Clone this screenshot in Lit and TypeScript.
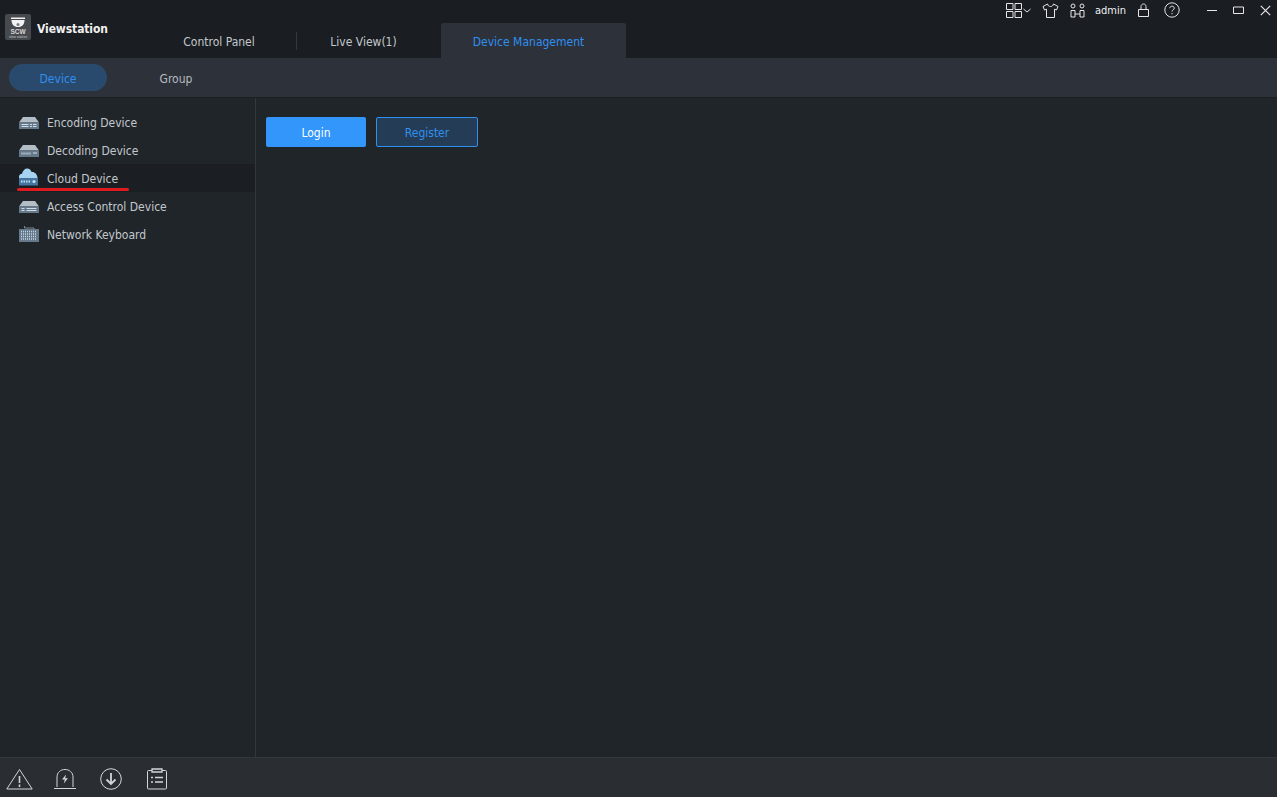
import { LitElement, html, css, svg } from "lit";
import { customElement } from "lit/decorators.js";

// device glyph shared by the sidebar rows, only the front panel differs
const deviceBody = svg`
  <path d="M4 2h12l4 5.500H0z" fill="#b3bdc5"/>
  <rect x="0" y="7.500" width="20" height="6.500" fill="#66798a"/>`;

const icons = {
  encoding: html`<svg width="20" height="14" viewBox="0 0 20 14">${deviceBody}
    <path d="M2.500 9.500h7M2.500 11.500h7M11 9.500h2M14 9.500h3.500M11 11.500h2M14 11.500h3.500" stroke="#cfdde8" stroke-width="1"/></svg>`,
  decoding: html`<svg width="20" height="14" viewBox="0 0 20 14">${deviceBody}
    <path d="M2.500 10.500h10" stroke="#cfdde8" stroke-width="2" stroke-dasharray="1 1"/>
    <path d="M14 10h4" stroke="#cfdde8" stroke-width="1"/></svg>`,
  cloud: html`<svg class="cloud" width="21" height="18" viewBox="0 0 21 18">
    <path d="M1 10C.6 7 2.300 5.800 4 5.800 4.800 2.500 7 .5 9 .5c2.500 0 4 1.700 4.600 3.600 3-.4 5.400 1.900 6 5.900z" fill="#a6d3f2"/>
    <rect x="1" y="10" width="19" height="7.500" fill="#46759f"/>
    <path d="M3 13.500h9" stroke="#bfe0f7" stroke-width="2" stroke-dasharray="1.500 1"/>
    <circle cx="16" cy="13.500" r="1.600" fill="#bfe0f7"/></svg>`,
  access: html`<svg width="20" height="14" viewBox="0 0 20 14">${deviceBody}
    <path d="M2.500 9.500h3M2.500 11.500h3M7.500 9.500h10M7.500 11.500h10" stroke="#cfdde8" stroke-width="1"/></svg>`,
  keyboard: html`<svg width="20" height="18" viewBox="0 0 20 18">
    <path d="M5.500 1v2h9.500v1" fill="none" stroke="#7d8a95" stroke-width="1"/>
    <rect x="0" y="4" width="20" height="13" fill="#66798a"/>
    <path d="M2 6.500h16M2 9h16M2 11.500h16M2 14h16" stroke="#c3d6e6" stroke-width="1.500" stroke-dasharray="1 1"/></svg>`,
};

const menu = [
  { label: "Encoding Device", icon: icons.encoding },
  { label: "Decoding Device", icon: icons.decoding },
  { label: "Cloud Device", icon: icons.cloud, selected: true },
  { label: "Access Control Device", icon: icons.access },
  { label: "Network Keyboard", icon: icons.keyboard },
];

@customElement("app-root")
export class AppRoot extends LitElement {
  static styles = css`
    :host {
      display: flex;
      flex-direction: column;
      width: 1277px;
      height: 797px;
      overflow: hidden;
      background: #20252a;
      color: #c3c8cc;
      font-family: "DejaVu Sans Condensed", "DejaVu Sans", sans-serif;
      font-stretch: condensed;
      font-size: 12px;
    }
    .titlebar {
      height: 58px;
      flex: none;
      display: flex;
      background: #1a1d21;
    }
    .brand {
      width: 157px;
      flex: none;
      display: flex;
      align-items: flex-start;
      gap: 6px;
      padding: 14px 0 0 5px;
      box-sizing: border-box;
      color: #f0f0f0;
      font-weight: 700;
    }
    .brand span {
      margin-top: 8px;
      letter-spacing: -0.1px;
    }
    .logo {
      width: 26px;
      height: 26px;
      display: block;
    }
    .logo .mark-name {
      font-family: "Liberation Sans", sans-serif;
      font-weight: 700;
      font-size: 6.500px;
      fill: #d8d8d8;
    }
    .logo .mark-sub {
      font-family: "Liberation Sans", sans-serif;
      font-size: 3.200px;
      fill: #a8a9ab;
    }
    .tabs {
      display: flex;
      align-items: flex-end;
      height: 58px;
    }
    .tab {
      height: 35px;
      display: flex;
      align-items: center;
      justify-content: center;
      box-sizing: border-box;
      padding-top: 2px;
    }
    .tab.control {
      width: 139px;
      padding-right: 15px;
    }
    .tab.live {
      width: 144px;
      padding-right: 11px;
    }
    .tab.active {
      width: 185px;
      padding-right: 10px;
      background: #2d323a;
      color: #2f8fef;
      border-radius: 2px 2px 0 0;
    }
    .sep {
      width: 1px;
      height: 18px;
      background: #33383e;
      align-self: center;
      margin-top: 24px;
    }
    .tools {
      margin-left: auto;
      display: flex;
      align-items: center;
      height: 20px;
      color: #e4e6e8;
      padding-right: 6px;
    }
    .tools svg {
      display: block;
      flex: none;
    }
    .admin {
      color: #eef1f4;
      font-size: 11px;
      padding-top: 1px;
    }
    .subbar {
      height: 40px;
      flex: none;
      display: flex;
      align-items: center;
      box-sizing: border-box;
      padding-left: 9px;
      background: #2d323a;
      border-bottom: 1px solid #1c2024;
    }
    .pill {
      width: 98px;
      height: 27px;
      border-radius: 14px;
      display: flex;
      align-items: center;
      justify-content: center;
      box-sizing: border-box;
      padding-top: 2px;
    }
    .pill.on {
      background: #2a4a6d;
      color: #2f8fef;
    }
    .pill.group {
      margin-left: 20px;
      color: #b5bac0;
    }
    .body {
      flex: 1;
      display: flex;
      min-height: 0;
    }
    .side {
      width: 256px;
      flex: none;
      box-sizing: border-box;
      padding-top: 10px;
      border-right: 1px solid #32373d;
    }
    .row {
      position: relative;
      height: 28px;
      display: flex;
      align-items: center;
      padding-left: 19px;
    }
    .row span {
      padding-top: 2px;
    }
    .row.selected {
      background: #1b1f23;
    }
    .row .ic {
      width: 28px;
      height: 18px;
      flex: none;
      display: flex;
      align-items: center;
    }
    .row .ic svg {
      display: block;
    }
    .row .ic .cloud {
      margin: -2px 0 0 -1px;
    }
    .mark {
      position: absolute;
      left: 17px;
      top: 24px;
      width: 112px;
      height: 3px;
      border-radius: 2px;
      background: #e01b1f;
    }
    .main {
      flex: 1;
      display: flex;
      align-items: flex-start;
      gap: 10px;
      padding: 19px 0 0 10px;
    }
    .btn {
      height: 30px;
      box-sizing: border-box;
      border-radius: 2px;
      display: flex;
      align-items: center;
      justify-content: center;
      padding-top: 2px;
    }
    .btn.login {
      width: 100px;
      background: #3296fa;
      color: #fff;
    }
    .btn.register {
      width: 102px;
      background: #253c56;
      border: 1px solid #3090f0;
      color: #3090f0;
    }
    .footer {
      height: 40px;
      flex: none;
      display: flex;
      align-items: center;
      box-sizing: border-box;
      padding: 2px 0 0 6px;
      background: #2a2e33;
      border-top: 1px solid #33383d;
      color: #d3d6d9;
    }
    .footer svg {
      display: block;
      flex: none;
    }
  `;

  render() {
    return html`
      <div class="titlebar">
        <div class="brand">
          <svg class="logo" viewBox="0 0 26 26">
            <rect width="26" height="26" rx="2" fill="#46494d"/>
            <path d="M6 3.500h14v1.500h-14z" fill="#f2f2f2"/>
            <path d="M6.500 6h13c0 4.500-2.500 7-6.500 7s-6.500-2.500-6.500-7z" fill="#f2f2f2"/>
            <circle cx="13" cy="10.500" r="1.500" fill="#77797c"/>
            <text class="mark-name" x="13" y="19.500" text-anchor="middle">SCW</text>
            <text class="mark-sub" x="13" y="23.500" text-anchor="middle">view station</text>
          </svg>
          <span>Viewstation</span>
        </div>
        <div class="tabs">
          <div class="tab control">Control Panel</div>
          <div class="sep"></div>
          <div class="tab live">Live View(1)</div>
          <div class="tab active">Device Management</div>
        </div>
        <div class="tools">
          <svg width="16" height="16" viewBox="0 0 16 16" fill="none" stroke="currentColor">
            <path d="M.5 1.500h6.500v6h-6.500zM9 1.500h6.500v6h-6.500zM.5 9.500h6.500v6h-6.500zM9 9.500h6.500v6h-6.500z"/>
          </svg>
          <svg width="10" height="15" viewBox="0 0 10 15" fill="none" stroke="currentColor" style="margin-right:10px">
            <path d="M1.500 6l3.500 3 3.500-3"/>
          </svg>
          <svg width="17" height="15" viewBox="0 0 17 15" fill="none" stroke="currentColor" style="margin-right:11px">
            <path d="M5.500 1L1 3.500 2.500 7l2-.8V14.500h8V6.200l2 .8L16 3.500 11.500 1c-.5 1.800-1.500 2.500-3 2.500S6 2.800 5.500 1z"/>
          </svg>
          <svg width="15" height="15" viewBox="0 0 15 15" fill="none" stroke="currentColor" style="margin-right:10px">
            <circle cx="3" cy="3" r="2"/><circle cx="12" cy="3" r="2"/>
            <path d="M1 7.500h4v6.500h-4zM10 7.500h4v6.500h-4zM5 11h5"/>
          </svg>
          <span class="admin">admin</span>
          <svg width="13" height="15" viewBox="0 0 13 15" fill="none" stroke="currentColor" style="margin:0 14px 0 11px">
            <path d="M1.500 6.500h10v7h-10zM4 6.500V3.500C4 2 5 1 6.500 1S9 2 9 3.500v3"/>
          </svg>
          <svg width="16" height="16" viewBox="0 0 16 16" fill="none" stroke="currentColor" style="margin-right:27px">
            <circle cx="8" cy="8" r="7.200"/>
            <path d="M5.800 6.200C6 4.800 7 4.200 8 4.200c1.300 0 2.300.8 2.300 1.900 0 1.700-2.300 1.700-2.300 3.500M8 11v1.300"/>
          </svg>
          <svg width="10" height="15" viewBox="0 0 10 15" stroke="currentColor" style="margin-right:16px">
            <path d="M0 7.500h10"/>
          </svg>
          <svg width="11" height="15" viewBox="0 0 11 15" fill="none" stroke="currentColor" style="margin-right:16px">
            <path d="M.5 4h10v6.500H.5z"/>
          </svg>
          <svg width="11" height="15" viewBox="0 0 11 15" stroke="currentColor" stroke-width="1.200">
            <path d="M.8 2.800l9.400 9.400M10.200 2.800L.8 12.200"/>
          </svg>
        </div>
      </div>
      <div class="subbar">
        <div class="pill on">Device</div>
        <div class="pill group">Group</div>
      </div>
      <div class="body">
        <div class="side">
          ${menu.map(
            (m) => html`
              <div class="row ${m.selected ? "selected" : ""}">
                <div class="ic">${m.icon}</div>
                <span>${m.label}</span>
                ${m.selected ? html`<div class="mark"></div>` : ""}
              </div>
            `
          )}
        </div>
        <div class="main">
          <div class="btn login">Login</div>
          <div class="btn register">Register</div>
        </div>
      </div>
      <div class="footer">
        <svg width="27" height="22" viewBox="0 0 27 22" fill="none" stroke="currentColor" style="margin-right:21px">
          <path d="M13.500 1.500L.8 21h25.400z" stroke-linejoin="round"/>
          <path d="M13.500 8v7M13.500 16.500v2.500" stroke-width="1.600"/>
        </svg>
        <svg width="22" height="22" viewBox="0 0 22 22" fill="none" stroke="currentColor" style="margin-right:24px">
          <path d="M3 19V9c0-4.500 3.500-7.500 8-7.500s8 3 8 7.500v10M0 20.500h22"/>
          <path d="M12 6.500l-4 5h2.800l-1 4 4.200-5.200h-2.800z" fill="currentColor" stroke="none"/>
        </svg>
        <svg width="22" height="22" viewBox="0 0 22 22" fill="none" stroke="currentColor" style="margin-right:25px">
          <circle cx="11" cy="11" r="10.300"/>
          <path d="M11 5v11M6.500 11.500l4.500 4.500 4.500-4.500" stroke-width="1.800"/>
        </svg>
        <svg width="20" height="22" viewBox="0 0 20 22" fill="none" stroke="currentColor">
          <path d="M5 2.500H1.500q-1 0-1 1v16.500q0 1 1 1h17q1 0 1-1V3.500q0-1-1-1H15"/>
          <path d="M5 1h10v3H5zM4 9.500h2M8 9.500h8M4 14h2M8 14h8" stroke-width="1.300"/>
        </svg>
      </div>
    `;
  }
}
